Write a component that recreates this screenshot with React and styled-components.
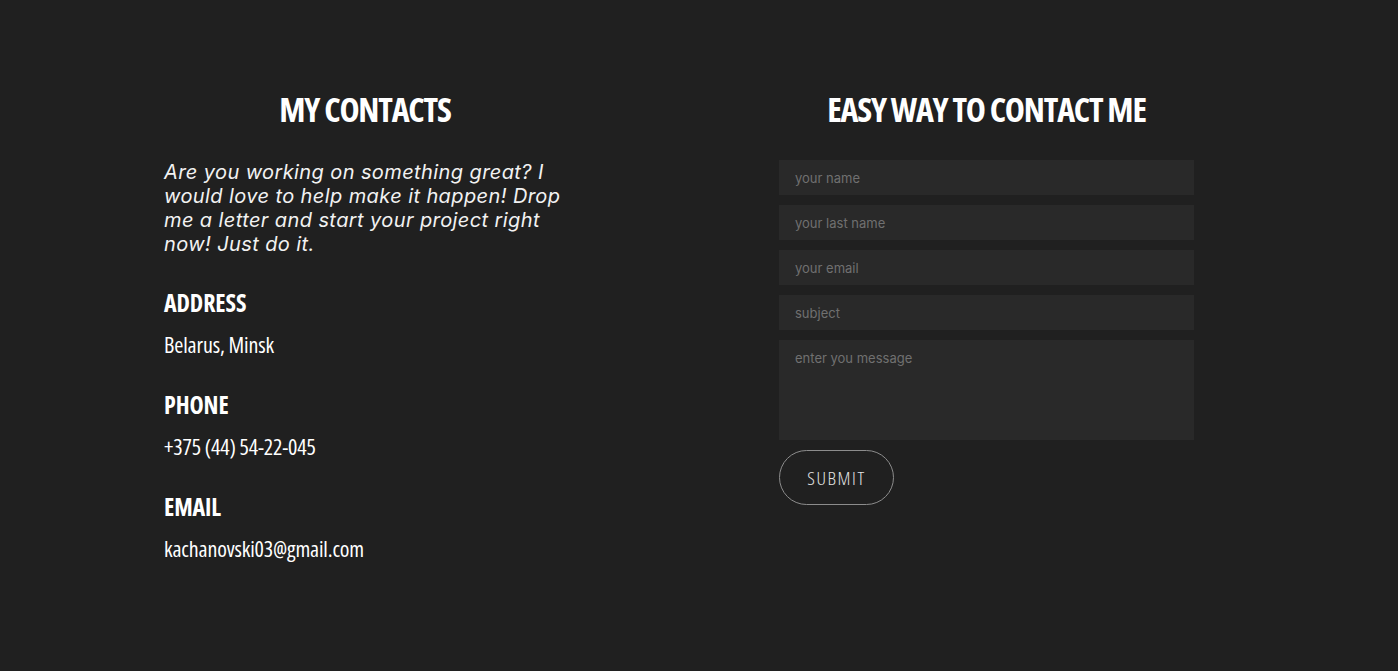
import React from "react";
import styled, { createGlobalStyle } from "styled-components";

const GlobalStyle = createGlobalStyle`
  html, body { margin: 0; padding: 0; background: #202020; }
  * { box-sizing: border-box; }
  #root { min-height: 671px; background: #202020; }
`;

const condensed = `
  font-family: "Open Sans", "Noto Sans", sans-serif;
  font-stretch: 75%;
`;

const Page = styled.section`
  display: flex;
  align-items: flex-start;
  gap: 213px;
  padding: 89px 0 0 164px;
  min-height: 671px;
  background: #202020;
  color: #fff;
`;

const Column = styled.div`
  display: flex;
  flex-direction: column;
  width: ${(p) => p.$width}px;
`;

const Heading = styled.h2`
  ${condensed}
  margin: 0 0 31px;
  font-size: 34px;
  line-height: 40px;
  font-weight: 700;
  letter-spacing: -1.2px;
  text-align: center;
  text-transform: uppercase;
  color: #fff;
`;

const Intro = styled.p`
  margin: 0 0 32px;
  font-family: Inter, "Open Sans", sans-serif;
  font-style: italic;
  font-size: 20px;
  line-height: 24px;
  letter-spacing: 0.4px;
  color: #f2f2f2;
`;

const InfoList = styled.div`
  display: flex;
  flex-direction: column;
  gap: 32px;
`;

const InfoGroup = styled.div`
  display: flex;
  flex-direction: column;
  gap: 12px;
`;

const InfoLabel = styled.h3`
  ${condensed}
  margin: 0;
  font-size: 24px;
  line-height: 30px;
  font-weight: 700;
  letter-spacing: -0.1px;
  text-transform: uppercase;
  color: #fff;
`;

const InfoValue = styled.div`
  ${condensed}
  font-size: 22px;
  line-height: 28px;
  font-weight: 400;
  letter-spacing: -0.15px;
  color: #fff;
`;

const Form = styled.form`
  display: flex;
  flex-direction: column;
  gap: 10px;
`;

const fieldBase = `
  display: block;
  width: 100%;
  margin: 0;
  border: none;
  outline: none;
  background: #292929;
  color: #ddd;
  font-family: Inter, "Open Sans", sans-serif;
  font-size: 13px;
  padding: 0 16px;
  &::placeholder { color: #707070; }
`;

const Field = styled.input`
  ${fieldBase}
  height: 35px;
`;

const Message = styled.textarea`
  ${fieldBase}
  height: 100px;
  padding-top: 10px;
  line-height: 16px;
  resize: none;
`;

const Submit = styled.button`
  ${condensed}
  align-self: flex-start;
  width: 115px;
  height: 55px;
  margin: 0;
  border: 1px solid #8c8c8c;
  border-radius: 28px;
  background: transparent;
  color: #e4e4e4;
  font-size: 19px;
  font-weight: 300;
  letter-spacing: 1.6px;
  text-transform: uppercase;
  cursor: pointer;
`;

const contacts = [
  { label: "Address", value: "Belarus, Minsk" },
  { label: "Phone", value: "+375 (44) 54-22-045" },
  { label: "Email", value: "kachanovski03@gmail.com" },
];

const fields = ["your name", "your last name", "your email", "subject"];

export default function App() {
  return (
    <>
      <GlobalStyle />
      <Page>
        <Column $width={402}>
          <Heading>My contacts</Heading>
          <Intro>
            Are you working on something great? I would love to help make it
            happen! Drop me a letter and start your project right now! Just do
            it.
          </Intro>
          <InfoList>
            {contacts.map((c) => (
              <InfoGroup key={c.label}>
                <InfoLabel>{c.label}</InfoLabel>
                <InfoValue>{c.value}</InfoValue>
              </InfoGroup>
            ))}
          </InfoList>
        </Column>
        <Column $width={415}>
          <Heading>Easy way to contact me</Heading>
          <Form onSubmit={(e) => e.preventDefault()}>
            {fields.map((f) => (
              <Field key={f} type="text" placeholder={f} />
            ))}
            <Message placeholder="enter you message" />
            <Submit type="submit">Submit</Submit>
          </Form>
        </Column>
      </Page>
    </>
  );
}
